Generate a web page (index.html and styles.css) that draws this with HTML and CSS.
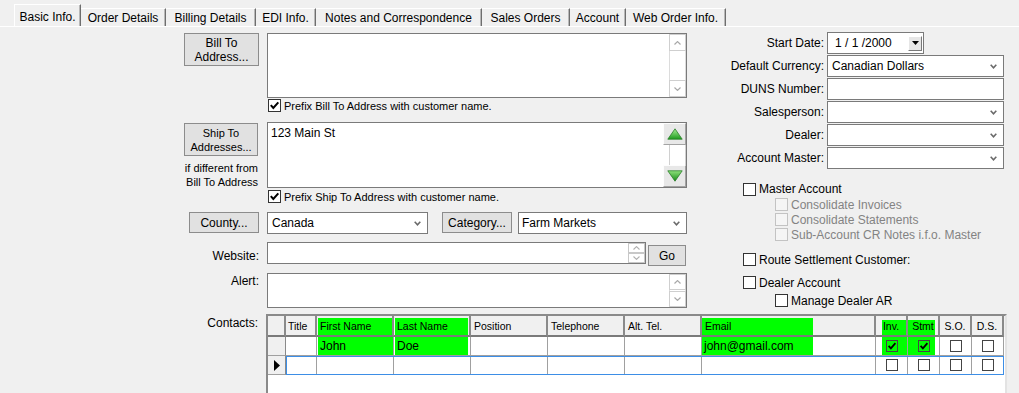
FILE: index.html
```html
<!DOCTYPE html>
<html>
<head>
<meta charset="utf-8">
<title>Customer</title>
<link rel="stylesheet" href="styles.css">
</head>
<body>
<div class="app">
  <div class="tabs">
    <div class="tab active t1">Basic Info.</div>
    <div class="tab t2">Order Details</div>
    <div class="tab t3">Billing Details</div>
    <div class="tab t4">EDI Info.</div>
    <div class="tab t5">Notes and Correspondence</div>
    <div class="tab t6">Sales Orders</div>
    <div class="tab t7">Account</div>
    <div class="tab t8">Web Order Info.</div>
  </div>
  <div class="panel">
    <div class="top">
      <div class="left">
        <div class="row r-bill">
          <div class="lbl"><div class="btn btn-addr">Bill To<br>Address...</div></div>
          <div class="fld">
            <div class="memo memo-bill">
              <div class="memo-text"></div>
              <div class="vscroll">
                <div class="sb-btn"><svg width="7" height="4" viewBox="0 0 7 4"><polyline points="0.5,3.5 3.5,0.6 6.5,3.5" fill="none" stroke="#a8a8a8" stroke-width="1.2"/></svg></div>
                <div class="sb-track"></div>
                <div class="sb-btn"><svg width="7" height="4" viewBox="0 0 7 4"><polyline points="0.5,0.5 3.5,3.4 6.5,0.5" fill="none" stroke="#a8a8a8" stroke-width="1.2"/></svg></div>
              </div>
            </div>
            <div class="chk-line"><span class="cb"><svg width="11" height="11" viewBox="0 0 11 11"><polyline points="1.8,5.2 4.3,8 9.3,2.3" fill="none" stroke="#000" stroke-width="2"/></svg></span><span>Prefix Bill To Address with customer name.</span></div>
          </div>
        </div>

        <div class="row r-ship">
          <div class="lbl">
            <div class="btn btn-ship">Ship To<br>Addresses...</div>
            <div class="note">if different from<br>Bill To Address</div>
          </div>
          <div class="fld">
            <div class="memo memo-ship">
              <div class="memo-text">123 Main St</div>
              <div class="gscroll">
                <div class="gbtn"><svg width="16" height="12" viewBox="0 0 16 12"><defs><linearGradient id="gu" x1="0" y1="0" x2="0" y2="1"><stop offset="0" stop-color="#a6ee94"/><stop offset="1" stop-color="#1c9a1c"/></linearGradient></defs><polygon points="8,0.8 15.2,11.2 0.8,11.2" fill="url(#gu)" stroke="#2a7d2a" stroke-width="0.8"/></svg></div>
                <div class="gtrack"></div>
                <div class="gbtn"><svg width="16" height="12" viewBox="0 0 16 12"><defs><linearGradient id="gd" x1="0" y1="0" x2="0" y2="1"><stop offset="0" stop-color="#8fe27c"/><stop offset="1" stop-color="#168a16"/></linearGradient></defs><polygon points="0.8,0.8 15.2,0.8 8,11.2" fill="url(#gd)" stroke="#2a7d2a" stroke-width="0.8"/></svg></div>
              </div>
            </div>
            <div class="chk-line"><span class="cb"><svg width="11" height="11" viewBox="0 0 11 11"><polyline points="1.8,5.2 4.3,8 9.3,2.3" fill="none" stroke="#000" stroke-width="2"/></svg></span><span>Prefix Ship To Address with customer name.</span></div>
          </div>
        </div>

        <div class="row r-county">
          <div class="lbl"><div class="btn btn-county">County...</div></div>
          <div class="fld fld-flex">
            <div class="inp sel sel-canada"><span>Canada</span><svg width="7" height="5" viewBox="0 0 7 5"><polyline points="0.7,0.8 3.5,3.8 6.3,0.8" fill="none" stroke="#6a6a6a" stroke-width="1.6"/></svg></div>
            <div class="btn btn-cat">Category...</div>
            <div class="inp sel sel-farm"><span>Farm Markets</span><svg width="7" height="5" viewBox="0 0 7 5"><polyline points="0.7,0.8 3.5,3.8 6.3,0.8" fill="none" stroke="#6a6a6a" stroke-width="1.6"/></svg></div>
          </div>
        </div>

        <div class="row r-web">
          <div class="lbl lbl-web">Website:</div>
          <div class="fld fld-flex">
            <div class="inp web">
              <div class="spin">
                <div class="sp"><svg width="7" height="4" viewBox="0 0 7 4"><polyline points="0.5,3.5 3.5,0.6 6.5,3.5" fill="none" stroke="#b0b0b0" stroke-width="1.1"/></svg></div>
                <div class="sp"><svg width="7" height="4" viewBox="0 0 7 4"><polyline points="0.5,0.5 3.5,3.4 6.5,0.5" fill="none" stroke="#b0b0b0" stroke-width="1.1"/></svg></div>
              </div>
            </div>
            <div class="btn btn-go">Go</div>
          </div>
        </div>

        <div class="row r-alert">
          <div class="lbl lbl-alert">Alert:</div>
          <div class="fld">
            <div class="memo memo-alert">
              <div class="memo-text"></div>
              <div class="vscroll small">
                <div class="sb-btn"><svg width="7" height="4" viewBox="0 0 7 4"><polyline points="0.5,3.5 3.5,0.6 6.5,3.5" fill="none" stroke="#a8a8a8" stroke-width="1.2"/></svg></div>
                <div class="sb-track"></div>
                <div class="sb-btn"><svg width="7" height="4" viewBox="0 0 7 4"><polyline points="0.5,0.5 3.5,3.4 6.5,0.5" fill="none" stroke="#a8a8a8" stroke-width="1.2"/></svg></div>
              </div>
            </div>
          </div>
        </div>
      </div>

      <div class="right">
        <div class="rform">
          <div class="rl">Start Date:</div>
          <div class="inp date"><span>1 / 1 /2000</span><div class="dbtn"><svg width="7" height="4" viewBox="0 0 7 4"><polygon points="0,0 7,0 3.5,4" fill="#000"/></svg></div></div>
          <div class="rl">Default Currency:</div>
          <div class="inp sel"><span>Canadian Dollars</span><svg width="7" height="5" viewBox="0 0 7 5"><polyline points="0.7,0.8 3.5,3.8 6.3,0.8" fill="none" stroke="#6a6a6a" stroke-width="1.6"/></svg></div>
          <div class="rl">DUNS Number:</div>
          <div class="inp"></div>
          <div class="rl">Salesperson:</div>
          <div class="inp sel"><span></span><svg width="7" height="5" viewBox="0 0 7 5"><polyline points="0.7,0.8 3.5,3.8 6.3,0.8" fill="none" stroke="#6a6a6a" stroke-width="1.6"/></svg></div>
          <div class="rl">Dealer:</div>
          <div class="inp sel"><span></span><svg width="7" height="5" viewBox="0 0 7 5"><polyline points="0.7,0.8 3.5,3.8 6.3,0.8" fill="none" stroke="#6a6a6a" stroke-width="1.6"/></svg></div>
          <div class="rl">Account Master:</div>
          <div class="inp sel"><span></span><svg width="7" height="5" viewBox="0 0 7 5"><polyline points="0.7,0.8 3.5,3.8 6.3,0.8" fill="none" stroke="#6a6a6a" stroke-width="1.6"/></svg></div>
        </div>
        <div class="rchecks">
          <div class="ck ck-master"><span class="cb"></span><span>Master Account</span></div>
          <div class="ck sub dis"><span class="cb"></span><span>Consolidate Invoices</span></div>
          <div class="ck sub dis"><span class="cb"></span><span>Consolidate Statements</span></div>
          <div class="ck sub dis"><span class="cb"></span><span>Sub-Account CR Notes i.f.o. Master</span></div>
          <div class="ck ck-route"><span class="cb"></span><span>Route Settlement Customer:</span></div>
          <div class="ck ck-dealer"><span class="cb"></span><span>Dealer Account</span></div>
          <div class="ck sub ck-manage"><span class="cb"></span><span>Manage Dealer AR</span></div>
        </div>
      </div>
    </div>

    <div class="contacts">
      <div class="lbl lbl-contacts">Contacts:</div>
      <div class="grid">
        <div class="grow head">
          <div class="rh"></div>
          <div class="cells">
            <div class="c w-t">Title</div>
            <div class="c w-n g h-fn">First Name</div>
            <div class="c w-n g h-ln">Last Name</div>
            <div class="c w-n">Position</div>
            <div class="c w-n">Telephone</div>
            <div class="c w-n">Alt. Tel.</div>
            <div class="c w-e g h-em">Email</div>
            <div class="c w-k g h-inv">Inv.</div>
            <div class="c w-k g h-st">Stmt</div>
            <div class="c w-k">S.O.</div>
            <div class="c w-k">D.S.</div>
          </div>
        </div>
        <div class="grow">
          <div class="rh"></div>
          <div class="cells">
            <div class="c w-t"></div>
            <div class="c w-n g b-fn">John</div>
            <div class="c w-n g b-ln">Doe</div>
            <div class="c w-n"></div>
            <div class="c w-n"></div>
            <div class="c w-n"></div>
            <div class="c w-e g b-em">john@gmail.com</div>
            <div class="c w-k g b-inv"><span class="gcb"><svg width="10" height="10" viewBox="0 0 10 10"><polyline points="1.6,4.8 3.9,7.3 8.4,2.2" fill="none" stroke="#000" stroke-width="1.8"/></svg></span></div>
            <div class="c w-k g b-st"><span class="gcb"><svg width="10" height="10" viewBox="0 0 10 10"><polyline points="1.6,4.8 3.9,7.3 8.4,2.2" fill="none" stroke="#000" stroke-width="1.8"/></svg></span></div>
            <div class="c w-k"><span class="gcb"></span></div>
            <div class="c w-k"><span class="gcb"></span></div>
          </div>
        </div>
        <div class="grow">
          <div class="rh"><svg width="6" height="11" viewBox="0 0 6 11"><polygon points="0,0 6,5.5 0,11" fill="#000"/></svg></div>
          <div class="cells selrow">
            <div class="c w-t"></div>
            <div class="c w-n"></div>
            <div class="c w-n"></div>
            <div class="c w-n"></div>
            <div class="c w-n"></div>
            <div class="c w-n"></div>
            <div class="c w-e"></div>
            <div class="c w-k"><span class="gcb"></span></div>
            <div class="c w-k"><span class="gcb"></span></div>
            <div class="c w-k"><span class="gcb"></span></div>
            <div class="c w-k"><span class="gcb"></span></div>
          </div>
        </div>
      </div>
    </div>
  </div>
</div>
</body>
</html>
```

FILE: styles.css
```css
* { box-sizing: border-box; margin: 0; padding: 0; }
html, body { width: 1019px; height: 393px; overflow: hidden; background: #f0f0f0; }
body { font-family: "Liberation Sans", Arial, sans-serif; font-size: 12px; color: #000; }
svg { display: block; }

.app { height: 393px; overflow: hidden; display: flex; flex-direction: column; }

/* tabs */
.tabs { display: flex; align-items: flex-end; height: 26px; padding-left: 14px; flex: none; }
.tab { height: 18px; padding-top: 1px; line-height: 16px; text-align: center; white-space: nowrap;
  border-top: 1px solid #fff; border-right: 1px solid #6e6e6e; box-shadow: inset -1px 0 0 #b8b8b8; }
.tab.active { height: 22px; padding-top: 4px; border-left: 1px solid #fff; }
.t1 { width: 67px; } .t2 { width: 85px; } .t3 { width: 90px; } .t4 { width: 60px; }
.t5 { width: 166px; } .t6 { width: 88px; } .t7 { width: 56px; } .t8 { width: 100px; }

.panel { border-top: 1px solid #fff; flex: 1; display: flex; flex-direction: column; min-height: 0; }
.top { display: flex; align-items: flex-start; flex: none; }

/* left column */
.left { width: 687px; flex: none; }
.row { display: flex; }
.lbl { width: 259px; flex: none; display: flex; flex-direction: column; align-items: flex-end; text-align: right; line-height: 14px; }
.fld { margin-left: 8px; width: 420px; flex: none; }
.fld-flex { display: flex; align-items: flex-start; }

.r-bill { margin-top: 6px; }
.r-ship { margin-top: 10px; }
.r-county { margin-top: 9px; }
.r-web { margin-top: 8px; }
.r-alert { margin-top: 7px; }

.btn { background: #e1e1e1; border: 1px solid #8c8c8c; display: flex; align-items: center; justify-content: center;
  text-align: center; line-height: 14px; flex: none; white-space: nowrap; }
.btn-addr { width: 75px; height: 33px; }
.btn-ship { width: 74px; height: 33px; margin-top: 1px; font-size: 11px; margin-right: 1px; }
.note { font-size: 11px; line-height: 14px; margin-top: 5px; padding-right: 1px; }
.btn-county { width: 70px; height: 21px; }
.btn-cat { width: 70px; height: 21px; margin-left: 14px; }
.btn-go { width: 38px; height: 21px; margin-left: 2px; margin-top: 3px; }

.lbl-web { padding-top: 7px; }
.lbl-alert { padding-top: 1px; }

.memo { background: #fff; border: 1px solid #7a7a7a; display: flex; }
.memo-bill { height: 65px; }
.memo-ship { height: 66px; }
.memo-alert { height: 35px; }
.memo-text { flex: 1; padding: 3px 3px; line-height: 14px; }

.vscroll { width: 17px; flex: none; display: flex; flex-direction: column; }
.sb-btn { height: 17px; flex: none; border: 1px solid #cfcfcf; background: #fff; display: flex; align-items: center; justify-content: center; }
.vscroll.small .sb-btn { height: 16px; }
.sb-track { flex: 1; border-left: 1px solid #dcdcdc; border-right: 1px solid #dcdcdc; }

.gscroll { width: 23px; flex: none; display: flex; flex-direction: column; align-items: flex-end; }
.gbtn { width: 23px; height: 22px; flex: none; background: #e8e8e8; border: 1px solid; border-color: #fdfdfd #a3a3a3 #a3a3a3 #fdfdfd;
  display: flex; align-items: center; justify-content: center; }
.gtrack { flex: 1; width: 17px; background: #fff; border-left: 1px solid #d0d0d0; border-right: 1px solid #d0d0d0; }

.chk-line { display: flex; align-items: center; height: 13px; margin-top: 1px; padding-left: 1px; font-size: 11px; white-space: nowrap; }
.r-ship .chk-line { margin-top: 2px; }
.chk-line .cb { margin-right: 3px; }
.cb { width: 13px; height: 13px; flex: none; border: 1px solid #333; background: #fff; display: flex; align-items: center; justify-content: center; }

.inp { background: #fff; border: 1px solid #7a7a7a; height: 22px; display: flex; align-items: center; padding-left: 4px; white-space: nowrap; flex: none; }
.sel { justify-content: space-between; padding-right: 6px; }
.sel-canada { width: 161px; }
.sel-farm { width: 169px; margin-left: 6px; padding-left: 3px; }
.web { width: 379px; padding: 0; justify-content: flex-end; }
.spin { width: 17px; height: 20px; display: flex; flex-direction: column; }
.sp { flex: 1; border: 1px solid #c8c8c8; display: flex; align-items: center; justify-content: center; }

/* right column */
.right { margin-left: 13px; width: 304px; flex: none; padding-top: 5px; }
.rform { display: grid; grid-template-columns: 124px 177px; column-gap: 3px; row-gap: 1px; grid-auto-rows: 22px; }
.rl { text-align: right; line-height: 22px; white-space: nowrap; }
.date { width: 97px; padding-left: 7px; padding-right: 1px; }
.dbtn { width: 14px; height: 15px; margin-left: auto; background: #e6e6e6; border: 1px solid; border-color: #fff #7a7a7a #7a7a7a #fff;
  display: flex; align-items: center; justify-content: center; }

.rchecks { margin-top: 12px; padding-left: 43px; }
.ck { display: flex; align-items: center; height: 15px; white-space: nowrap; }
.ck .cb { margin-right: 3px; }
.ck-master { height: 16px; }
.ck.sub { padding-left: 32px; }
.ck.dis { color: #838383; }
.ck.dis .cb { border-color: #c3c3c3; background: #f5f5f5; }
.ck-route { margin-top: 10px; }
.ck-dealer { margin-top: 8px; }
.ck-manage { margin-top: 3px; }

/* contacts grid */
.contacts { display: flex; margin-top: 6px; flex: 1; min-height: 0; }
.lbl-contacts { padding-top: 2px; padding-right: 1px; }
.grid { margin-left: 7px; width: 741px; height: 100px; flex: none; background: #fff;
  border: 2px solid; border-color: #8a8a8a #e3e3e3 #e3e3e3 #8a8a8a; }
.grow { display: flex; height: 19px; }
.grow.head { height: 21px; background: #f0f0f0; }
.rh { width: 18px; flex: none; background: #f0f0f0; border-right: 1px solid #8a8a8a; border-bottom: 1px solid #a0a0a0;
  display: flex; align-items: center; justify-content: center; }
.head .rh { border-right: 2px solid #8a8a8a; border-bottom: 2px solid #7a7a7a; }
.cells { display: flex; height: 100%; }
.c { flex: none; height: 100%; border-right: 1px solid #a0a0a0; border-bottom: 1px solid #a0a0a0; padding-left: 3px;
  display: flex; align-items: center; white-space: nowrap; overflow: hidden; }
.head .c { border-right: 2px solid #8a8a8a; border-bottom: 2px solid #7a7a7a; font-size: 10.5px; }
.head .w-t { padding-left: 2px; }
.w-t { width: 31px; }
.w-n { width: 77px; }
.w-e { width: 174px; }
.w-k { width: 32px; justify-content: center; padding-left: 0; }
.selrow { outline: 1px solid #3d8ee6; outline-offset: -1px; }

.g { background-image: linear-gradient(#00ff00, #00ff00); background-repeat: no-repeat; }
.h-fn { background-position: 1px 2px; background-size: 75px 100%; }
.h-ln { background-position: 1px 2px; background-size: 73px 100%; }
.h-em { background-position: 0 2px; background-size: 111px 100%; }
.h-inv { background-position: 6px 4px; background-size: 25px 100%; }
.h-st { background-position: 0 4px; background-size: 27px 100%; }
.b-fn { background-position: 1px 0; background-size: 75px 100%; }
.b-ln { background-position: 1px 0; background-size: 73px 100%; }
.b-em { background-position: 0 0; background-size: 111px 100%; padding-left: 2px; }
.b-inv { background-position: 6px 0; background-size: 25px 100%; }
.b-st { background-position: 0 0; background-size: 27px 100%; }

.gcb { width: 12px; height: 12px; border: 1px solid #444; display: flex; align-items: center; justify-content: center; }
```
